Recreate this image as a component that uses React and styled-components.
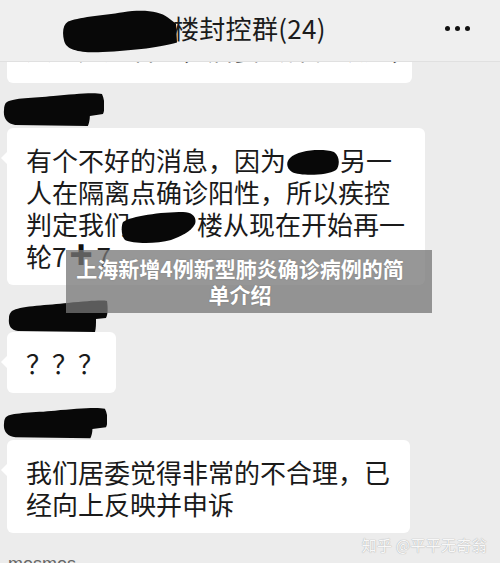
import React from "react";
import styled, { createGlobalStyle } from "styled-components";

const GlobalStyle = createGlobalStyle`
  html, body {
    margin: 0;
    padding: 0;
    background: #ececec;
  }
  * {
    box-sizing: border-box;
  }
`;

const CJK = `"Noto Sans CJK SC", "Noto Sans", sans-serif`;

const SCRIBBLES = {
  header:
    "M6 12 C14 8 40 6 60 3 C80 0 96 2 104 8 L112 14 L113 32 C100 36 70 40 40 41 C20 42 4 40 2 30 C0 22 1 15 6 12 Z",
  name:
    "M4 10 C10 6 30 6 50 4 C70 2 90 0 98 2 C101 8 101 18 99 22 L86 24 C86 28 85 32 84 34 L12 33 C4 32 0 26 1 18 C1 14 2 11 4 10 Z",
  nameB:
    "M6 10 C14 6 40 5 60 3 C80 1 94 0 99 1 C100 8 100 14 98 18 L88 19 C88 24 88 28 87 32 L10 31 C3 30 0 26 1 18 C1 14 3 11 6 10 Z",
  small:
    "M4 10 C12 2 36 0 48 4 C54 8 54 18 50 22 C40 28 14 28 6 24 C0 20 0 14 4 10 Z",
  wide:
    "M2 12 C10 6 40 2 62 2 C72 2 76 8 74 14 C70 22 60 26 50 30 C36 34 12 34 4 30 C0 26 0 16 2 12 Z",
};

const Ink = styled.svg`
  display: block;
  filter: blur(0.7px);
`;

const Scribble = ({ kind, w, h, vw, vh }) => (
  <Ink width={w} height={h} viewBox={`0 0 ${vw} ${vh}`} preserveAspectRatio="none">
    <path d={SCRIBBLES[kind]} fill="#080808" />
  </Ink>
);

const Page = styled.div`
  position: relative;
  width: 500px;
  height: 563px;
  overflow: hidden;
  background: #ececec;
  font-family: ${CJK};
`;

const Header = styled.header`
  height: 62px;
  background: #efefef;
  border-bottom: 1px solid #e0e0e0;
  display: flex;
  align-items: center;
  padding: 0 30px 0 62px;
`;

const Title = styled.div`
  flex: 1;
  display: flex;
  align-items: center;
  font-size: 26px;
  font-weight: 400;
  color: #1b1b1b;
  letter-spacing: 0.3px;
`;

const TitleText = styled.span`
  margin-left: -4px;
  margin-top: -6px;
`;

const Dots = styled.div`
  display: flex;
  gap: 5px;
  margin-top: -4px;
`;

const Dot = styled.span`
  width: 5px;
  height: 5px;
  border-radius: 50%;
  background: #111;
`;

const ChatList = styled.main`
  display: flex;
  flex-direction: column;
  align-items: flex-start;
  padding-left: 7px;
`;

const Bubble = styled.div`
  position: relative;
  background: #fff;
  border-radius: 6px;
  padding: ${(p) => (p.$tight ? "15px 12px 14px 19px" : "16px 20px 13px 19px")};
  font-size: 26px;
  line-height: 32px;
  color: #1a1a1a;
  white-space: nowrap;

  &::before {
    content: "";
    position: absolute;
    left: -6px;
    top: 24px;
    border-style: solid;
    border-width: 6px 6px 6px 0;
    border-color: transparent #fff transparent transparent;
  }
`;

const CutBubble = styled(Bubble)`
  height: 21px;
  width: 405px;
  overflow: hidden;
  padding-top: 0;
  border-radius: 0 0 6px 6px;
  color: #444;

  &::before {
    display: none;
  }
`;

const Hidden = styled.div`
  margin-top: -29px;
`;

const NameRow = styled.div`
  height: ${(p) => p.$h}px;
  display: flex;
  align-items: flex-end;
  margin-left: ${(p) => p.$x}px;
`;

const NameText = styled.div`
  font-family: "Liberation Sans", Arial, sans-serif;
  font-size: 18px;
  color: #666;
  padding-top: 21px;
  margin-left: 1px;
`;

const InlineInk = styled.span`
  display: inline-block;
  vertical-align: middle;
  line-height: 0;
  margin: ${(p) => p.$m};
`;

const Plus = styled.span`
  display: inline-block;
  font-weight: 900;
  font-size: 38px;
  line-height: 26px;
  vertical-align: top;
  margin: 0 4px 0 3px;
  color: #111;
`;

const Overlay = styled.div`
  position: absolute;
  left: 66px;
  top: 250px;
  width: 366px;
  height: 63px;
  background: rgba(118, 118, 118, 0.76);
  color: #fff;
  font-family: ${CJK};
  font-weight: 700;
  font-size: 21px;
  line-height: 26px;
  text-align: center;
  padding: 5px 24px 0 6px;
  text-shadow: 0 0 2px rgba(0, 0, 0, 0.15);
`;

const Watermark = styled.div`
  position: absolute;
  right: 13px;
  bottom: 8px;
  font-size: 15px;
  color: #f8f8f8;
  text-shadow: 0 0 1px #b0b0b0, 0 0 1px #bcbcbc;
  letter-spacing: 0.3px;
`;

export default function App() {
  return (
    <>
      <GlobalStyle />
      <Page>
        <Header>
          <Title>
            <Scribble kind="header" w={115} h={44} vw={113} vh={42} />
            <TitleText>楼封控群(24)</TitleText>
          </Title>
          <Dots>
            <Dot />
            <Dot />
            <Dot />
          </Dots>
        </Header>

        <ChatList>
          <CutBubble>
            <Hidden>大家先别着急，居委会都在跟进，有消息</Hidden>
          </CutBubble>

          <NameRow $h={45} $x={-4}>
            <Scribble kind="name" w={101} h={36} vw={100} vh={36} />
          </NameRow>
          <Bubble>
            有个不好的消息，因为
            <InlineInk $m="-10px 0 -6px 0">
              <Scribble kind="small" w={54} h={28} vw={54} vh={28} />
            </InlineInk>
            另一
            <br />
            人在隔离点确诊阳性，所以疾控
            <br />
            判定我们
            <InlineInk $m="-10px 0 -8px -9px">
              <Scribble kind="wide" w={76} h={34} vw={76} vh={34} />
            </InlineInk>
            楼从现在开始再一
            <br />
            轮7<Plus>+</Plus>7
          </Bubble>

          <NameRow $h={47} $x={1}>
            <Scribble kind="nameB" w={100} h={32} vw={100} vh={32} />
          </NameRow>
          <Bubble $tight>？？？</Bubble>

          <NameRow $h={47} $x={-4}>
            <Scribble kind="name" w={104} h={33} vw={100} vh={36} />
          </NameRow>
          <Bubble>
            我们居委觉得非常的不合理，已
            <br />
            经向上反映并申诉
          </Bubble>

          <NameText>mosmos</NameText>
        </ChatList>

        <Overlay>上海新增4例新型肺炎确诊病例的简单介绍</Overlay>
        <Watermark>知乎 @平平无奇翁</Watermark>
      </Page>
    </>
  );
}
